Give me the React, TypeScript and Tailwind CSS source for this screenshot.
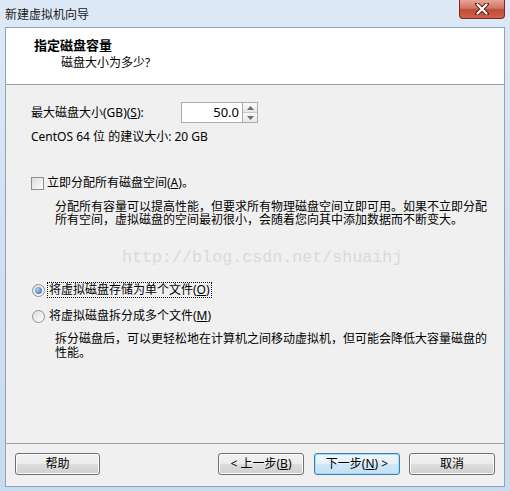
import React from "react";

const font = { fontFamily: '"Noto Sans", "Noto Sans CJK SC", sans-serif' };

function Btn({ children, focused, className = "" }: { children: React.ReactNode; focused?: boolean; className?: string }) {
  return (
    <div
      className={`h-[22px] rounded-[3px] border flex items-center justify-center text-[12px] leading-none text-black ${
        focused
          ? "border-[#3c7fb1] bg-[linear-gradient(#eef7fd_0%,#e2f1fb_50%,#cfe8f8_50%,#c2e1f5_100%)] shadow-[inset_0_0_0_1px_#a8d8f5]"
          : "border-[#707070] bg-[linear-gradient(#f2f2f2_0%,#ebebeb_50%,#dddddd_50%,#cfcfcf_100%)] shadow-[inset_0_0_0_1px_#fcfcfc]"
      } ${className}`}
    >
      {children}
    </div>
  );
}

function Radio({ checked }: { checked?: boolean }) {
  return (
    <div className="w-[13px] h-[13px] rounded-full border border-[#8e8f8f] bg-[linear-gradient(135deg,#dcdcdc,#ffffff)] flex items-center justify-center shrink-0">
      {checked && <div className="w-[7px] h-[7px] rounded-full bg-[radial-gradient(circle_at_35%_35%,#a9d3f5,#2a62a8)]" />}
    </div>
  );
}

export default function App() {
  return (
    <div
      className="w-[510px] h-[491px] relative overflow-hidden bg-[linear-gradient(180deg,#dde9f6_0%,#d3e2f2_40%,#c9dbee_100%)] flex flex-col"
      style={font}
    >
      {/* title bar */}
      <div className="h-[27px] shrink-0 flex items-start justify-between pl-[5px]">
        <div className="mt-[7px] text-[12px] leading-[16px] text-[#1a1a1a]">新建虚拟机向导</div>
        <div className="mr-[5px] w-[46px] h-[19px] rounded-b-[4px] border border-t-0 border-[#7a2a22] bg-[linear-gradient(#e6a597_0%,#d27563_45%,#bd4b38_55%,#d0624c_100%)] flex items-center justify-center">
          <svg width="14" height="12" viewBox="0 0 14 12">
            <path d="M2 1 L12 11 M12 1 L2 11" stroke="#5a1a10" strokeWidth="4" strokeLinecap="round" />
            <path d="M2.5 1.5 L11.5 10.5 M11.5 1.5 L2.5 10.5" stroke="#ffffff" strokeWidth="2.2" strokeLinecap="round" />
          </svg>
        </div>
      </div>

      {/* client area */}
      <div className="mx-[5px] h-[460px] shrink-0 border border-[#8ea4be] flex flex-col bg-[#f0f0f0]">
        {/* header */}
        <div className="h-[57px] shrink-0 bg-white border-b border-[#a0a0a0] pl-[28px] pt-[9px]">
          <div className="text-[13px] font-bold leading-[17px] text-black">指定磁盘容量</div>
          <div className="pl-[27px] mt-[1px] text-[12px] leading-[16px] text-black">磁盘大小为多少?</div>
        </div>

        {/* content */}
        <div className="flex-1 pl-[25px] text-[12px] text-black">
          <div className="mt-[17px] h-[21px] flex items-center">
            <div className="w-[150px] leading-[14px]">
              最大磁盘大小(GB)(<u>S</u>):
            </div>
            <div className="flex h-[21px] w-[77px]">
              <div className="flex-1 border border-[#abadb3] bg-white flex items-center justify-end pr-[3px] text-[13px] leading-none">
                50.0
              </div>
              <div className="w-[15px] flex flex-col border border-l-0 border-[#abadb3] bg-[#f4f4f4]">
                <div className="flex-1 border-b border-[#c8c8c8] flex items-center justify-center bg-[linear-gradient(#fafafa,#e6e6e6)]">
                  <svg width="7" height="4" viewBox="0 0 7 4"><path d="M0 4 L3.5 0 L7 4Z" fill="#6d6d6d" /></svg>
                </div>
                <div className="flex-1 flex items-center justify-center bg-[linear-gradient(#fafafa,#e6e6e6)]">
                  <svg width="7" height="4" viewBox="0 0 7 4"><path d="M0 0 L3.5 4 L7 0Z" fill="#6d6d6d" /></svg>
                </div>
              </div>
            </div>
          </div>

          <div className="mt-[7px] leading-[14px]">CentOS 64 位 的建议大小: 20 GB</div>

          <div className="mt-[32px] h-[14px] flex items-center">
            <div className="w-[13px] h-[13px] border border-[#8e8f8f] bg-[linear-gradient(135deg,#dcdcdc,#ffffff)] shrink-0" />
            <div className="ml-[3px] leading-[14px]">
              立即分配所有磁盘空间(<u>A</u>)。
            </div>
          </div>

          <div className="mt-[10px] pl-[24px] leading-[13px] w-[480px]">
            <div>分配所有容量可以提高性能，但要求所有物理磁盘空间立即可用。如果不立即分配</div>
            <div>所有空间，虚拟磁盘的空间最初很小，会随着您向其中添加数据而不断变大。</div>
          </div>

          <div
            className="mt-[22px] pl-[91px] h-[20px] text-[16.7px] leading-[20px] text-[#dadada]"
            style={{ fontFamily: '"Liberation Mono", monospace' }}
          >
            http://blog.csdn.net/shuaihj
          </div>

          <div className="mt-[14px] h-[16px] flex items-center">
            <div className="ml-[1px]"><Radio checked /></div>
            <div className="ml-[2px] px-[1px] border border-dotted border-black leading-[14px]">
              将虚拟磁盘存储为单个文件(<u>O</u>)
            </div>
          </div>

          <div className="mt-[10px] h-[16px] flex items-center">
            <div className="ml-[1px]"><Radio /></div>
            <div className="ml-[4px] leading-[14px]">
              将虚拟磁盘拆分成多个文件(<u>M</u>)
            </div>
          </div>

          <div className="mt-[8px] pl-[24px] leading-[14px] w-[480px]">
            <div>拆分磁盘后，可以更轻松地在计算机之间移动虚拟机，但可能会降低大容量磁盘的</div>
            <div>性能。</div>
          </div>
        </div>

        {/* footer */}
        <div className="h-[43px] shrink-0 border-t border-[#a0a0a0] flex items-start pt-[9px] px-[9px]">
          <Btn className="w-[85px]">帮助</Btn>
          <div className="flex-1" />
          <Btn className="w-[86px]">&lt; 上一步(<u>B</u>)</Btn>
          <Btn focused className="w-[86px] ml-[10px]">下一步(<u>N</u>) &gt;</Btn>
          <Btn className="w-[86px] ml-[9px]">取消</Btn>
        </div>
      </div>
    </div>
  );
}
